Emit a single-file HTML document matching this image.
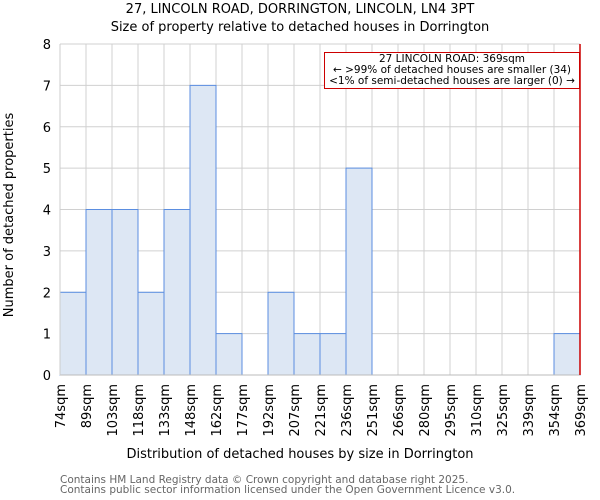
<!DOCTYPE html>
<html><head><style>body{margin:0;background:#fff}svg{display:block;font-family:"DejaVu Sans","Liberation Sans",sans-serif}</style></head><body>
<svg width="600" height="500" xmlns="http://www.w3.org/2000/svg">
<text x="300" y="13" font-size="13" text-anchor="middle">27, LINCOLN ROAD, DORRINGTON, LINCOLN, LN4 3PT</text>
<text x="300" y="31" font-size="13" text-anchor="middle">Size of property relative to detached houses in Dorrington</text>
<g stroke="#d0d0d0" stroke-width="1">
<line x1="60" y1="333.6" x2="580" y2="333.6"/><line x1="60" y1="292.3" x2="580" y2="292.3"/><line x1="60" y1="250.9" x2="580" y2="250.9"/><line x1="60" y1="209.5" x2="580" y2="209.5"/><line x1="60" y1="168.1" x2="580" y2="168.1"/><line x1="60" y1="126.8" x2="580" y2="126.8"/><line x1="60" y1="85.4" x2="580" y2="85.4"/><line x1="60" y1="44" x2="580" y2="44"/>
<line x1="86" y1="44" x2="86" y2="375"/><line x1="112" y1="44" x2="112" y2="375"/><line x1="138" y1="44" x2="138" y2="375"/><line x1="164" y1="44" x2="164" y2="375"/><line x1="190" y1="44" x2="190" y2="375"/><line x1="216" y1="44" x2="216" y2="375"/><line x1="242" y1="44" x2="242" y2="375"/><line x1="268" y1="44" x2="268" y2="375"/><line x1="294" y1="44" x2="294" y2="375"/><line x1="320" y1="44" x2="320" y2="375"/><line x1="346" y1="44" x2="346" y2="375"/><line x1="372" y1="44" x2="372" y2="375"/><line x1="398" y1="44" x2="398" y2="375"/><line x1="424" y1="44" x2="424" y2="375"/><line x1="450" y1="44" x2="450" y2="375"/><line x1="476" y1="44" x2="476" y2="375"/><line x1="502" y1="44" x2="502" y2="375"/><line x1="528" y1="44" x2="528" y2="375"/><line x1="554" y1="44" x2="554" y2="375"/>
</g>
<g fill="#dde7f4" stroke="#5b8ee0" stroke-width="1">
<rect x="60" y="292.3" width="26" height="82.7"/><rect x="86" y="209.5" width="26" height="165.5"/><rect x="112" y="209.5" width="26" height="165.5"/><rect x="138" y="292.3" width="26" height="82.7"/><rect x="164" y="209.5" width="26" height="165.5"/><rect x="190" y="85.4" width="26" height="289.6"/><rect x="216" y="333.6" width="26" height="41.4"/><rect x="268" y="292.3" width="26" height="82.7"/><rect x="294" y="333.6" width="26" height="41.4"/><rect x="320" y="333.6" width="26" height="41.4"/><rect x="346" y="168.1" width="26" height="206.9"/><rect x="554" y="333.6" width="26" height="41.4"/>
</g>
<line x1="60" y1="375" x2="580" y2="375" stroke="#bbb"/>
<line x1="60" y1="44" x2="60" y2="375" stroke="#ccc"/>
<line x1="580" y1="44" x2="580" y2="375" stroke="#c00" stroke-width="1.5"/>
<g font-size="13" text-anchor="end">
<text x="51" y="380">0</text><text x="51" y="338.6">1</text><text x="51" y="297.3">2</text><text x="51" y="255.9">3</text><text x="51" y="214.5">4</text><text x="51" y="173.1">5</text><text x="51" y="131.8">6</text><text x="51" y="90.4">7</text><text x="51" y="49">8</text>
</g>
<g font-size="13" text-anchor="end">
<text transform="translate(65,384) rotate(-90)">74sqm</text><text transform="translate(91,384) rotate(-90)">89sqm</text><text transform="translate(117,384) rotate(-90)">103sqm</text><text transform="translate(143,384) rotate(-90)">118sqm</text><text transform="translate(169,384) rotate(-90)">133sqm</text><text transform="translate(195,384) rotate(-90)">148sqm</text><text transform="translate(221,384) rotate(-90)">162sqm</text><text transform="translate(247,384) rotate(-90)">177sqm</text><text transform="translate(273,384) rotate(-90)">192sqm</text><text transform="translate(299,384) rotate(-90)">207sqm</text><text transform="translate(325,384) rotate(-90)">221sqm</text><text transform="translate(351,384) rotate(-90)">236sqm</text><text transform="translate(377,384) rotate(-90)">251sqm</text><text transform="translate(403,384) rotate(-90)">266sqm</text><text transform="translate(429,384) rotate(-90)">280sqm</text><text transform="translate(455,384) rotate(-90)">295sqm</text><text transform="translate(481,384) rotate(-90)">310sqm</text><text transform="translate(507,384) rotate(-90)">325sqm</text><text transform="translate(533,384) rotate(-90)">339sqm</text><text transform="translate(559,384) rotate(-90)">354sqm</text><text transform="translate(585,384) rotate(-90)">369sqm</text>
</g>
<text x="300" y="458" font-size="13" text-anchor="middle">Distribution of detached houses by size in Dorrington</text>
<text transform="translate(13,215) rotate(-90)" font-size="13" text-anchor="middle">Number of detached properties</text>
<rect x="324.5" y="52.5" width="255" height="36" fill="#fff" stroke="#c00"/>
<g font-size="10.5" text-anchor="middle"><text x="452" y="62">27 LINCOLN ROAD: 369sqm</text><text x="452" y="73">← &gt;99% of detached houses are smaller (34)</text><text x="452" y="84">&lt;1% of semi-detached houses are larger (0) →</text></g>
<g font-size="10.5" fill="#666"><text x="60" y="483">Contains HM Land Registry data © Crown copyright and database right 2025.</text><text x="60" y="493">Contains public sector information licensed under the Open Government Licence v3.0.</text></g>
</svg>
</body></html>
